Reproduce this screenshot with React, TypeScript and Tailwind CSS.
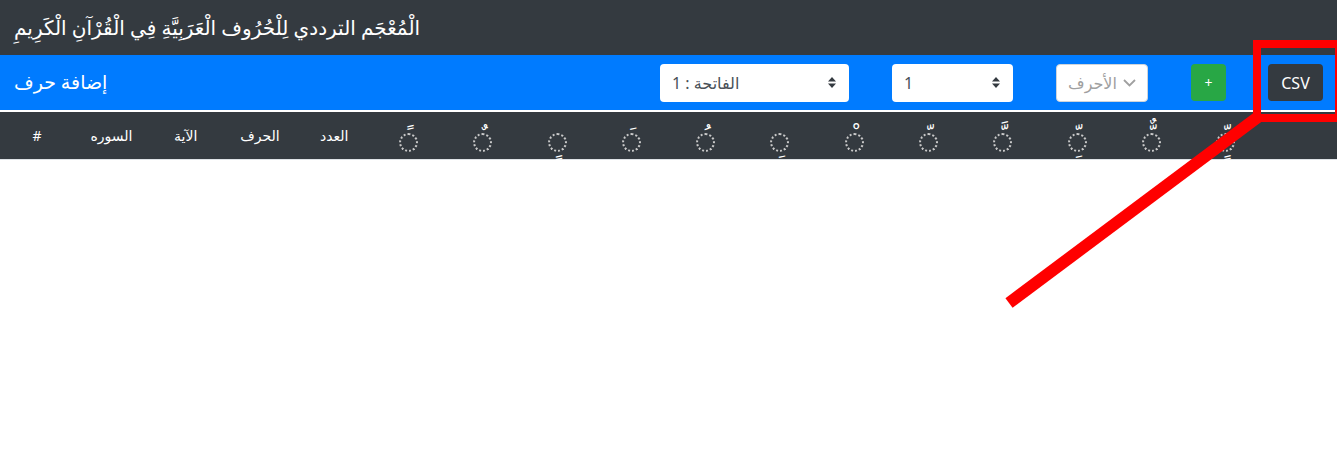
import React from 'react'

const labels = ['#', 'السوره', 'الآية', 'الحرف', 'العدد']

// [above, below]
const marks: [string, string][] = [
  ['ً', ''],
  ['ٌ', ''],
  ['', 'ٍ'],
  ['َ', ''],
  ['ُ', ''],
  ['', 'ِ'],
  ['ْ', ''],
  ['ّ', ''],
  ['َّ', ''],
  ['ّ', 'ِ'],
  ['ٌّ', ''],
  ['ّ', 'ٍ'],
]

function UpDown() {
  return (
    <svg width="8" height="11" viewBox="0 0 8 11" className="shrink-0">
      <path d="M4 0 L8 4.5 H0 Z" fill="#343a40" />
      <path d="M4 11 L8 6.5 H0 Z" fill="#343a40" />
    </svg>
  )
}

function Harakah({ above, below }: { above: string; below: string }) {
  return (
    <div className="flex flex-col items-center pt-[4px]">
      <div className="h-[14px] text-[22px] leading-[30px] text-white">{above ? '\u00A0' + above : '\u00A0'}</div>
      <div className="w-[19px] h-[19px] rounded-full border-2 border-dotted border-[#c9c9c9]" />
      <div className="h-[10px] -mt-[6px] text-[22px] leading-[0px] text-white">{below ? '\u00A0' + below : '\u00A0'}</div>
    </div>
  )
}

export default function App() {
  return (
    <div className="relative min-h-[452px] bg-white" style={{ fontFamily: '"Noto Sans", "DejaVu Sans", sans-serif' }}>
      <header className="h-[55px] bg-[#343a40] flex items-center px-[14px]">
        <h1 className="text-white text-[20px] leading-none">
          الْمُعْجَم الترددي لِلْحُرُوف الْعَرَبِيَّةِ فِي الْقُرْآنِ الْكَرِيمِ
        </h1>
      </header>

      <div className="h-[55px] bg-[#007bff] flex items-center px-[14px] border-b-2 border-white box-content">
        <span className="text-white text-[19px]">إضافة حرف</span>
        <div className="ml-auto flex items-center">
          <div className="w-[189px] h-[38px] bg-white rounded-[4px] flex items-center justify-between pl-3 pr-[13px] text-[#495057] text-[16px]">
            <span>الفاتحة : 1</span>
            <UpDown />
          </div>
          <div className="ml-[43px] w-[121px] h-[38px] bg-white rounded-[4px] flex items-center justify-between pl-3 pr-[13px] text-[#495057] text-[16px]">
            <span>1</span>
            <UpDown />
          </div>
          <div className="ml-[43px] w-[92px] h-[38px] bg-white rounded-[4px] border border-[#ced4da] flex items-center justify-center gap-[6px] text-[#a0a0a0] text-[16px]">
            <span>الأحرف</span>
            <svg width="13" height="8" viewBox="0 0 13 8">
              <path d="M1 1 L6.5 6.5 L12 1" stroke="#a0a0a0" strokeWidth="1.8" fill="none" />
            </svg>
          </div>
          <button className="ml-[43px] w-[35px] h-[37px] bg-[#28a745] rounded-[4px] text-white text-[14px]">+</button>
          <button className="ml-[42px] w-[55px] h-[37px] bg-[#343a40] rounded-[4px] text-white text-[16px]">CSV</button>
        </div>
      </div>

      <div className="h-[48px] bg-[#343a40] border-b border-[#dee2e6] grid grid-cols-[repeat(18,minmax(0,1fr))] items-center">
        {labels.map((c) => (
          <div key={c} className="text-center text-white text-[14px]">
            {c}
          </div>
        ))}
        {marks.map(([a, b], i) => (
          <Harakah key={i} above={a} below={b} />
        ))}
        <div />
      </div>

      {/* annotation */}
      <div className="absolute left-[1253px] top-[40px] w-[90px] h-[82px] border-[8px] border-[#ff0000] pointer-events-none" />
      <svg className="absolute left-0 top-0 pointer-events-none" width="1337" height="452">
        <line x1="1258" y1="117" x2="1009" y2="303" stroke="#ff0000" strokeWidth="12" />
      </svg>
    </div>
  )
}
